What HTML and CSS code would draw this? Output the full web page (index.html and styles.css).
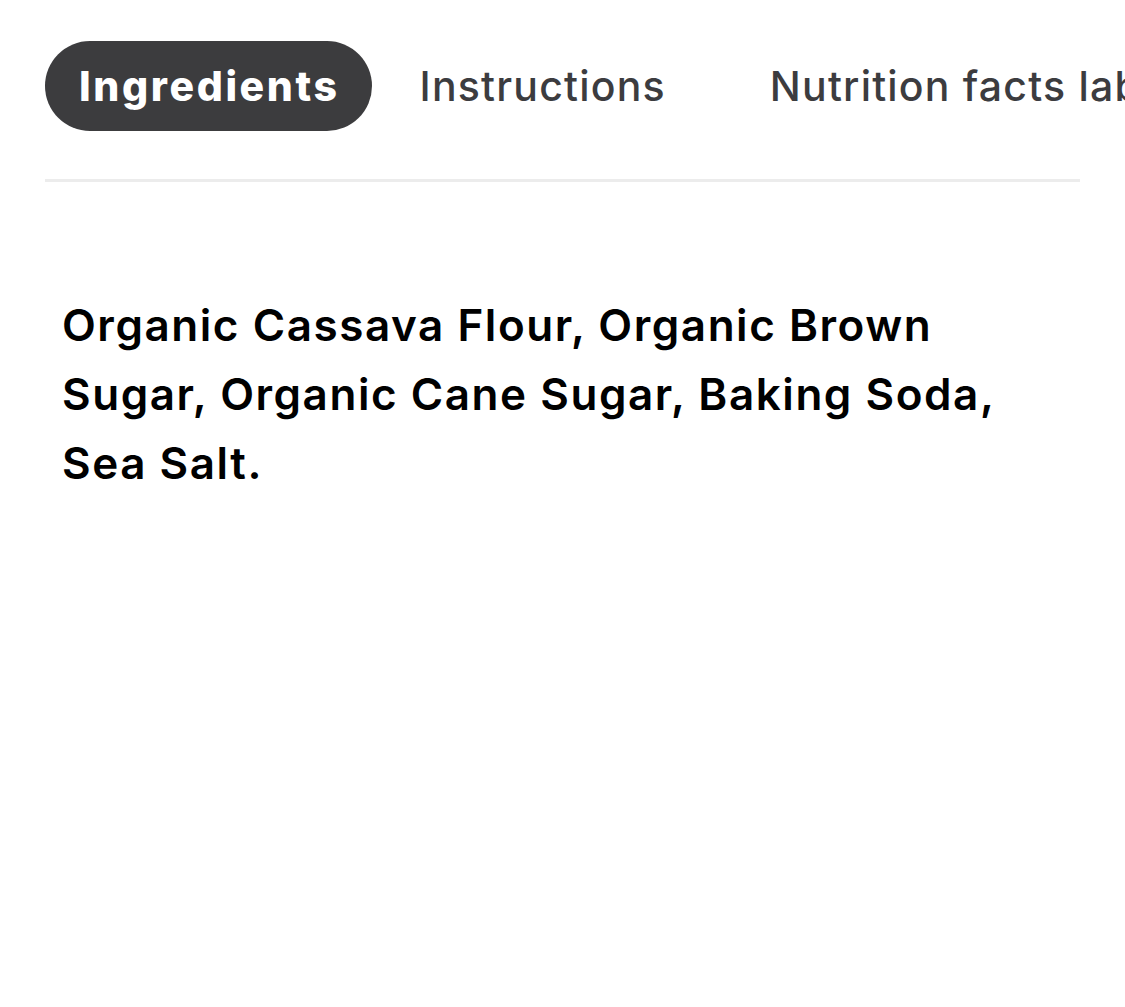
FILE: index.html
```html
<!DOCTYPE html>
<html lang="en">
<head>
<meta charset="utf-8">
<title>Ingredients</title>
<link rel="stylesheet" href="styles.css">
</head>
<body>
<div class="page">
  <nav class="tabs">
    <div class="tab tab-active">Ingredients</div>
    <div class="tab tab-instructions">Instructions</div>
    <div class="tab tab-nutrition">Nutrition facts label</div>
  </nav>
  <div class="divider"></div>
  <p class="ingredients">Organic Cassava Flour, Organic Brown Sugar, Organic Cane Sugar, Baking Soda, Sea Salt.</p>
</div>
</body>
</html>
```
FILE: styles.css
```css
html, body {
  margin: 0;
  padding: 0;
  background: #ffffff;
  overflow: hidden;
}
body {
  font-family: Inter, "Noto Sans", "Liberation Sans", sans-serif;
  width: 1125px;
  height: 1007px;
}
.page {
  padding: 41px 45px 0 45px;
}
.tabs {
  display: flex;
  align-items: center;
  white-space: nowrap;
  height: 90px;
}
.tab {
  font-size: 41px;
  font-weight: 500;
  letter-spacing: 1.2px;
  color: #3c3c3f;
  line-height: 90px;
  height: 90px;
}
.tab-active {
  background: #3c3c3e;
  color: #ffffff;
  font-size: 41px;
  font-weight: 800;
  letter-spacing: 2.6px;
  border-radius: 45px;
  padding: 0 32px 0 34px;
}
.tab-instructions {
  margin-left: 48px;
}
.tab-nutrition {
  margin-left: 104px;
}
.divider {
  margin-top: 48px;
  height: 3px;
  background: #ececec;
  width: 1035px;
}
.ingredients {
  margin: 109px 0 0 17px;
  width: 1000px;
  font-size: 44px;
  font-weight: 600;
  letter-spacing: 1.55px;
  line-height: 69px;
  color: #000000;
}
```
